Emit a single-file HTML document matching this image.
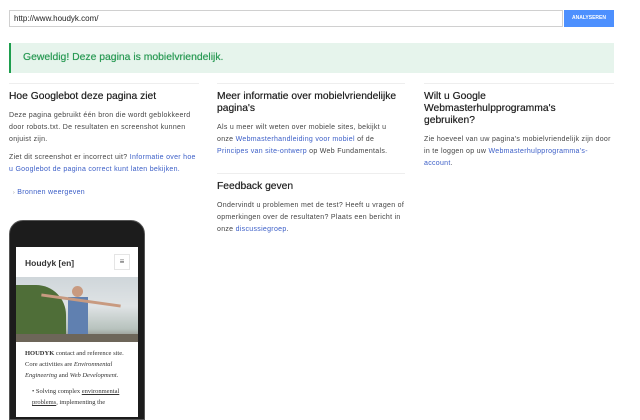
<!DOCTYPE html>
<html><head><meta charset="utf-8"><style>
*{margin:0;padding:0;box-sizing:border-box}
body{width:640px;height:411px;overflow:hidden;background:#fff;font-family:"Liberation Sans",Arial,sans-serif;color:#222;position:relative}
.abs{position:absolute}
.inp{left:9px;top:10px;width:554px;height:17px;border:1px solid #d0d0d0;font-size:8px;line-height:15px;padding-left:4px;color:#222}
.btn{left:564px;top:10px;width:50px;height:17px;background:#4d90fe;color:#fff;font-size:5px;font-weight:bold;text-align:center;line-height:17px}
.ban{left:9px;top:43px;width:605px;height:30px;background:#e6f4ec;border-left:2px solid #1e9e4e;color:#2a9a55;font-size:10.4px;padding:9px 0 0 12px;text-shadow:0 0 .5px #2a9a55}
.col{border-top:1px solid #eee;width:190px}
h3{font-size:10.3px;font-weight:normal;color:#222;line-height:12px;margin:7px 0 7px;text-shadow:0 0 .4px #222;white-space:nowrap}
p{font-size:7px;letter-spacing:.3px;line-height:12px;color:#444;margin-bottom:6px;white-space:nowrap}
a{color:#3b5ec7;text-decoration:none}
</style></head><body>
<div class="abs inp">http://www.houdyk.com/</div>
<div class="abs btn">ANALYSEREN</div>
<div class="abs ban">Geweldig! Deze pagina is mobielvriendelijk.</div>

<div class="abs col" style="left:9px;top:83px">
<h3>Hoe Googlebot deze pagina ziet</h3>
<p>Deze pagina gebruikt één bron die wordt geblokkeerd<br>door robots.txt. De resultaten en screenshot kunnen<br>onjuist zijn.</p>
<p>Ziet dit screenshot er incorrect uit? <a>Informatie over hoe<br>u Googlebot de pagina correct kunt laten bekijken.</a></p>
<p style="margin-top:11px;padding-left:4px"><span style="font-size:5px;color:#888">›</span> <a>Bronnen weergeven</a></p>
</div>
<div class="abs col" style="left:217px;top:83px;width:188px">
<h3>Meer informatie over mobielvriendelijke<br>pagina's</h3>
<p>Als u meer wilt weten over mobiele sites, bekijkt u<br>onze <a>Webmasterhandleiding voor mobiel</a> of de<br><a>Principes van site-ontwerp</a> op Web Fundamentals.</p>
</div>
<div class="abs col" style="left:217px;top:173px;width:188px">
<h3>Feedback geven</h3>
<p>Ondervindt u problemen met de test? Heeft u vragen of<br>opmerkingen over de resultaten? Plaats een bericht in<br>onze <a>discussiegroep</a>.</p>
</div>
<div class="abs col" style="left:424px;top:83px">
<h3>Wilt u Google<br>Webmasterhulpprogramma's<br>gebruiken?</h3>
<p>Zie hoeveel van uw pagina's mobielvriendelijk zijn door<br>in te loggen op uw <a>Webmasterhulpprogramma's-<br>account</a>.</p>
</div>

<div class="abs" style="left:9px;top:220px;width:136px;height:200px;background:#1c1c1c;border-radius:14px 14px 0 0;border:1px solid #555"></div>
<div class="abs" style="left:16px;top:247px;width:122px;height:170px;background:#fff">
<div style="position:absolute;left:9px;top:11px;font-size:8.5px;font-weight:bold;color:#333">Houdyk [en]</div>
<div style="position:absolute;left:98px;top:7px;width:16px;height:16px;border:1px solid #e5e5e5;font-size:8px;text-align:center;line-height:14px;color:#555">≡</div>
<div style="position:absolute;left:0;top:30px;width:122px;height:65px;background:linear-gradient(180deg,#cfd6da 0%,#dfe3e5 45%,#b7c2bd 80%,#7d7a6e 100%)">
<div style="position:absolute;left:0;top:8px;width:50px;height:55px;background:#4f6e38;border-radius:0 30px 0 0"></div>
<div style="position:absolute;left:52px;top:20px;width:20px;height:38px;background:#6080b0"></div>
<div style="position:absolute;left:56px;top:9px;width:11px;height:11px;background:#c89a80;border-radius:50%"></div>
<div style="position:absolute;left:25px;top:22px;width:80px;height:3px;background:#c89a80;transform:rotate(8deg)"></div>
<div style="position:absolute;left:0;top:57px;width:122px;height:8px;background:#6d6659"></div>
</div>
<div style="position:absolute;left:9px;top:101px;width:108px;font-family:'Liberation Serif',serif;font-size:6.5px;line-height:11px;color:#333"><b>HOUDYK</b> contact and reference site. Core activities are <i>Environmental Engineering</i> and <i>Web Development</i>.<br><div style="margin-top:5px;padding-left:7px">• Solving complex <u>environmental problems</u>, implementing the</div></div>
</div>
</body></html>
